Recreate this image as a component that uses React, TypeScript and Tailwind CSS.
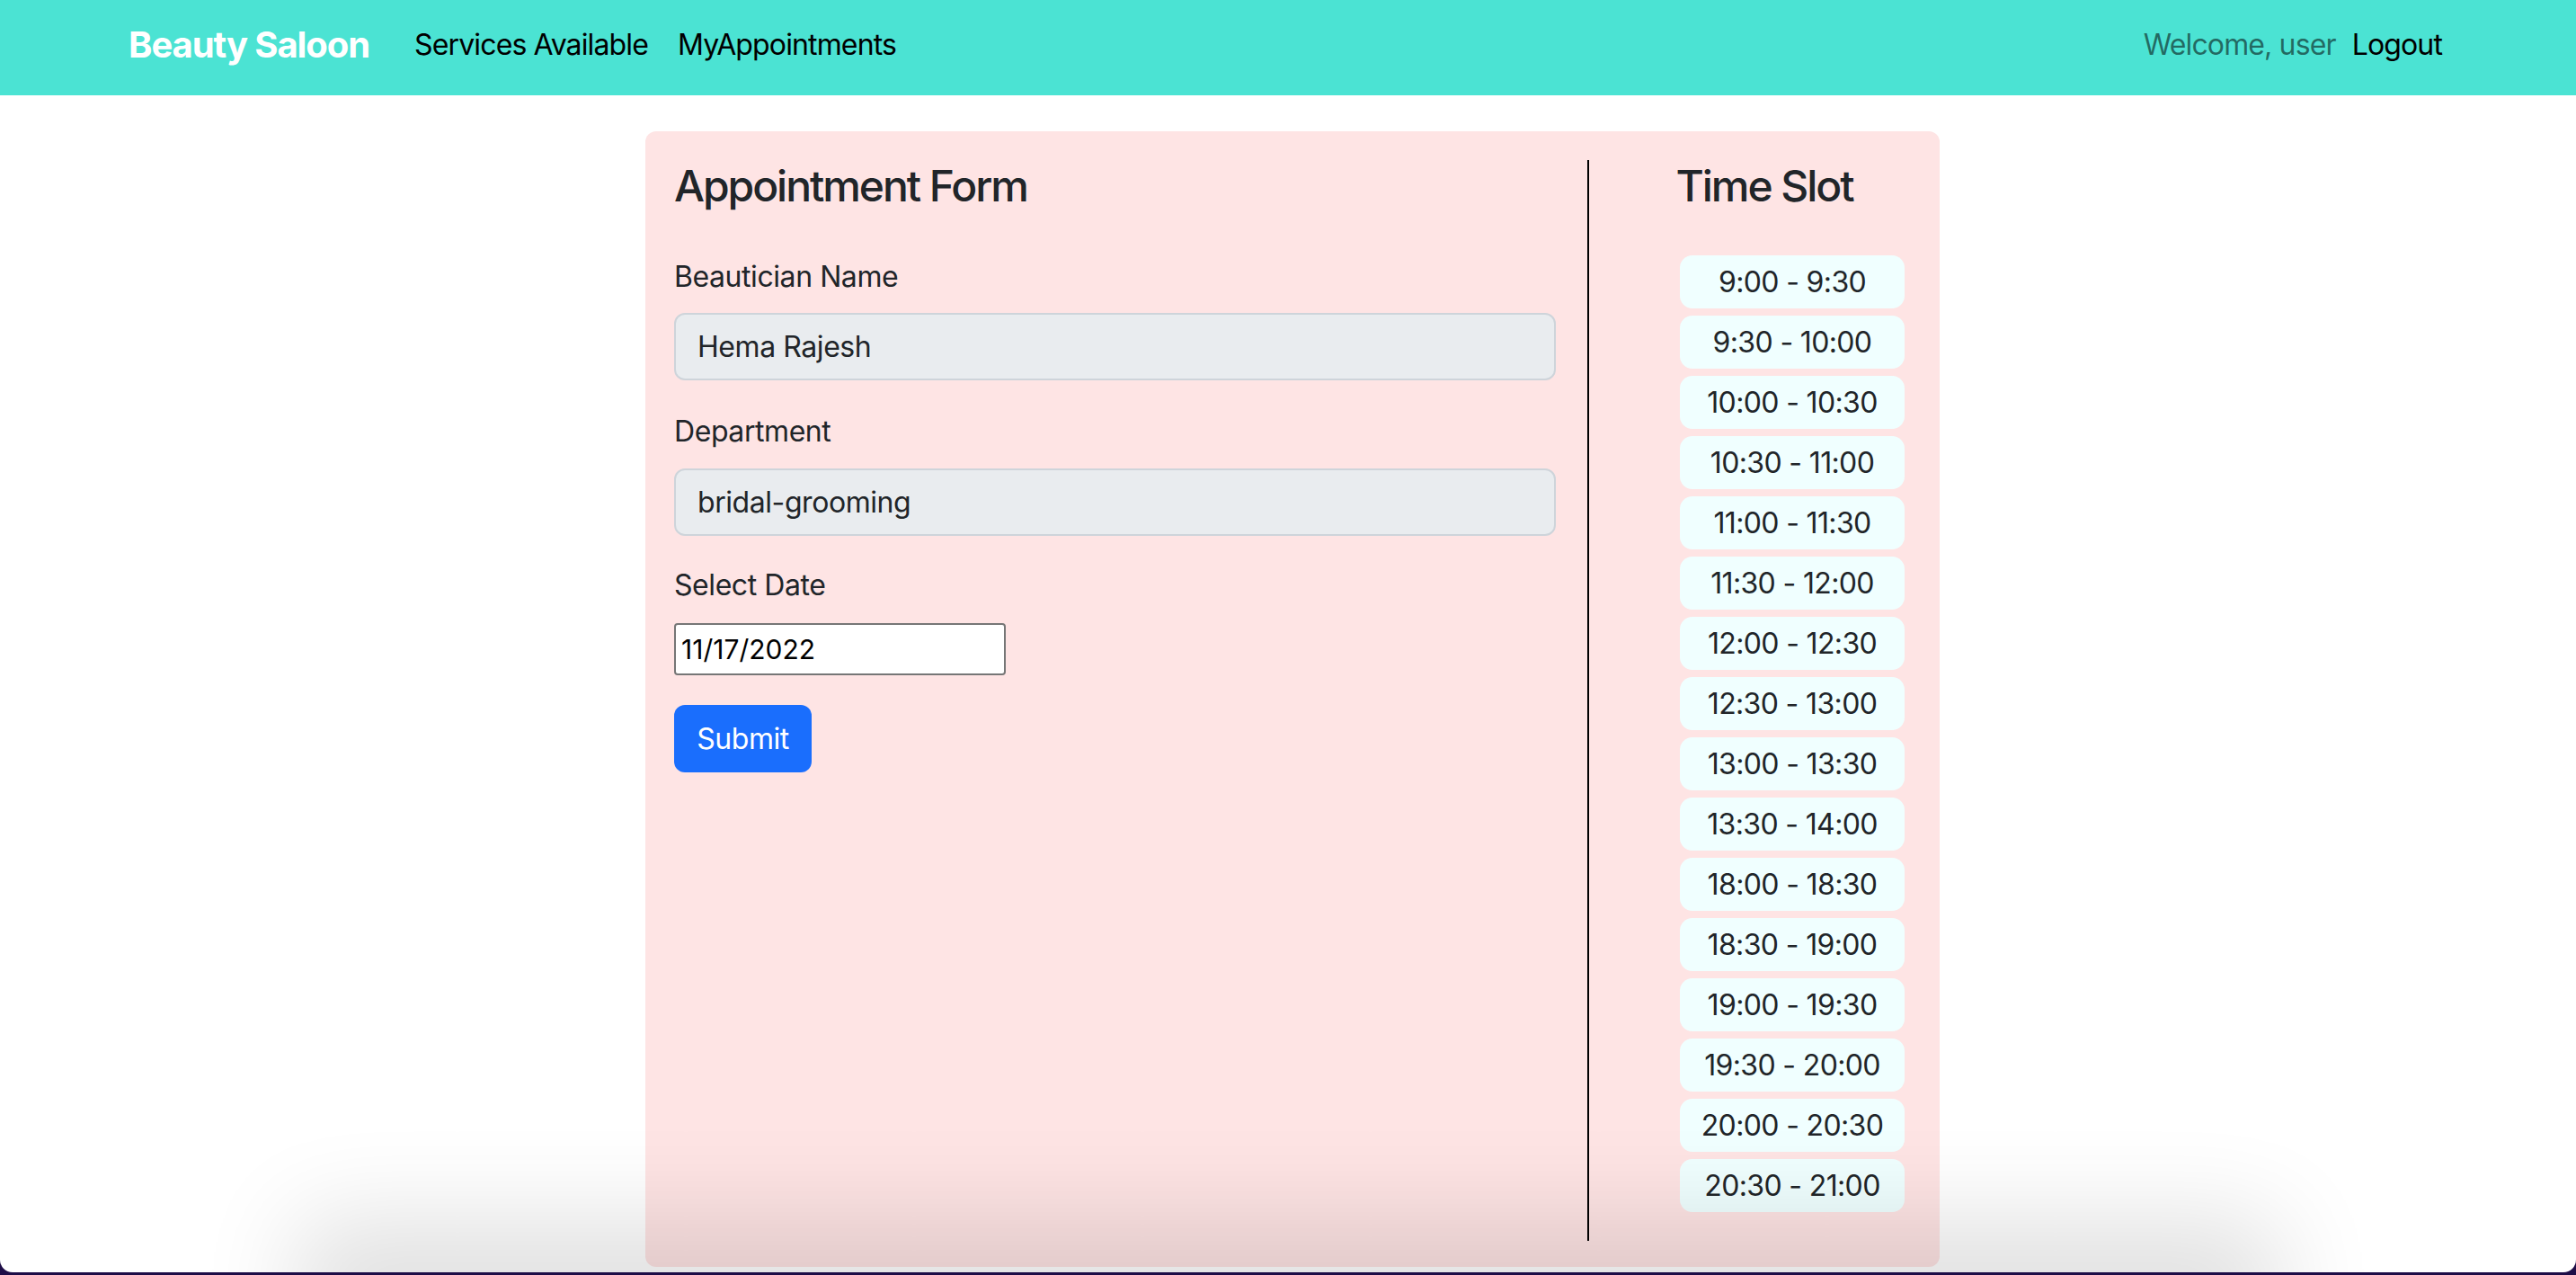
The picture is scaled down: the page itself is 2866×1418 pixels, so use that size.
const slots = [
  "9:00 - 9:30",
  "9:30 - 10:00",
  "10:00 - 10:30",
  "10:30 - 11:00",
  "11:00 - 11:30",
  "11:30 - 12:00",
  "12:00 - 12:30",
  "12:30 - 13:00",
  "13:00 - 13:30",
  "13:30 - 14:00",
  "18:00 - 18:30",
  "18:30 - 19:00",
  "19:00 - 19:30",
  "19:30 - 20:00",
  "20:00 - 20:30",
  "20:30 - 21:00",
];

export default function App() {
  return (
    <div className="h-screen w-full overflow-hidden bg-[#1e0d47] font-['Inter',sans-serif] text-[#212529]">
      <div className="relative flex h-[1415px] flex-col overflow-hidden rounded-b-[14px] bg-white">
        <nav className="flex h-[106px] shrink-0 items-start bg-[#4be3d3] pl-[143px] pr-[149px] pt-[26px]">
          <span className="text-[40px] font-bold leading-[48px] tracking-[-0.027em] text-white">
            Beauty Saloon
          </span>
          <div className="ml-[50px] flex gap-[33px] text-[32px] leading-[48px] tracking-[-0.027em] text-black">
            <span>Services Available</span>
            <span>MyAppointments</span>
          </div>
          <div className="ml-auto flex gap-[18px] text-[32px] leading-[48px] tracking-[-0.027em]">
            <span className="text-black/55">Welcome, user</span>
            <span className="text-black">Logout</span>
          </div>
        </nav>

        <main className="flex-1 pt-[40px]">
          <div className="ml-[718px] flex w-[1440px] rounded-[12px] bg-[#fee4e4] pb-[29px] pt-[32px]">
            {/* Form column */}
            <div className="w-[1048px] shrink-0 pl-[32px] pr-[35px] tracking-[-0.027em]">
              <h4 className="text-[48px] font-medium leading-[58px] tracking-[-0.043em]">
                Appointment Form
              </h4>

              <div className="mt-[48px] text-[32px] leading-[48px]">Beautician Name</div>
              <div className="mt-[16px] flex h-[75px] items-center rounded-[12px] border-2 border-[#ced4da] bg-[#e9ecef] px-[24px] text-[32px] leading-[48px]">
                Hema Rajesh
              </div>

              <div className="mt-[33px] text-[32px] leading-[48px]">Department</div>
              <div className="mt-[17px] flex h-[75px] items-center rounded-[12px] border-2 border-[#ced4da] bg-[#e9ecef] px-[24px] text-[32px] leading-[48px]">
                bridal-grooming
              </div>

              <div className="mt-[31px] text-[32px] leading-[48px]">Select Date</div>
              <div className="mt-[18px] flex h-[58px] w-[369px] items-center rounded-[4px] border-2 border-[#767676] bg-white px-[6px] text-[30px] tracking-normal text-black">
                11/17/2022
              </div>

              <div className="mt-[33px] flex h-[75px] w-[153px] items-center justify-center rounded-[12px] bg-[#1a6efd] text-[32px] leading-[48px] text-white">
                Submit
              </div>
            </div>

            {/* Divider */}
            <div className="w-[2px] shrink-0 self-stretch bg-black" />

            {/* Time slot column */}
            <div className="flex w-[390px] shrink-0 flex-col">
              <h4 className="text-center text-[48px] font-medium leading-[58px] tracking-[-0.043em]">
                Time Slot
              </h4>
              <div className="ml-[101px] mt-[48px] flex w-[250px] flex-col gap-[8px] pb-[32px]">
                {slots.map((s) => (
                  <div
                    key={s}
                    className="flex h-[59px] items-center justify-center rounded-[14px] bg-[#f0ffff] text-[32px] leading-[48px] tracking-[-0.02em]"
                  >
                    {s}
                  </div>
                ))}
              </div>
            </div>
          </div>
        </main>

        <div className="pointer-events-none absolute bottom-[-30px] left-[400px] right-[400px] h-[20px] shadow-[0_0_110px_70px_rgba(0,0,0,0.12)]" />
      </div>
    </div>
  );
}
